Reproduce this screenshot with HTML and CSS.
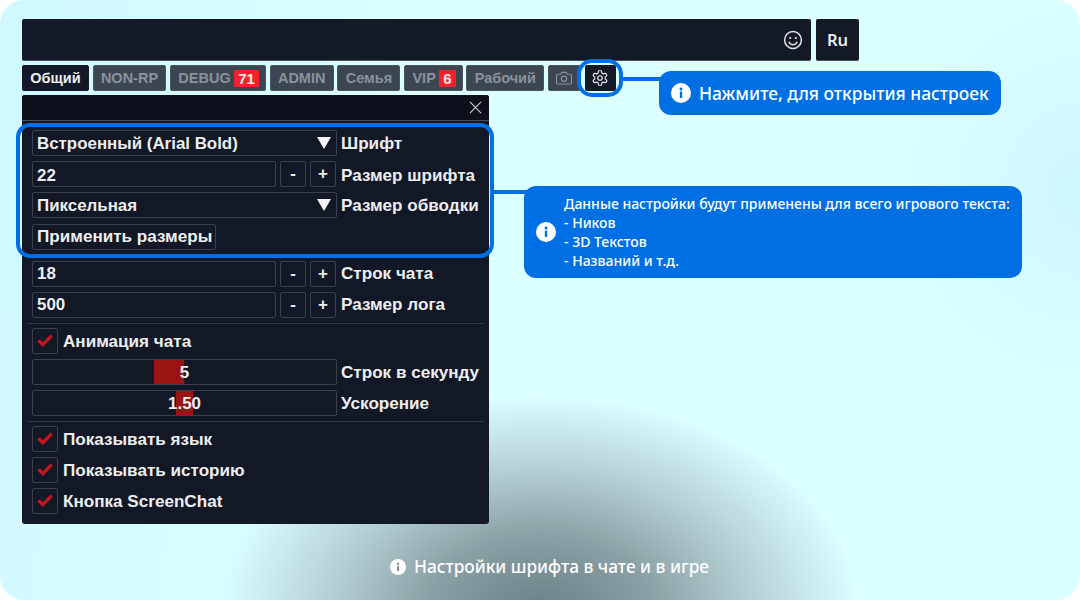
FILE: index.html
```html
<!DOCTYPE html>
<html lang="ru">
<head>
<meta charset="utf-8">
<title>Настройки чата</title>
<link rel="stylesheet" href="styles.css">
</head>
<body>
<main class="screen">
  <div class="chat-row">
    <div class="chat-input">
      <svg class="smile" viewBox="0 0 20 20"><circle cx="10" cy="10" r="8.4"/><circle class="dot" cx="7.2" cy="8" r="1.1"/><circle class="dot" cx="12.8" cy="8" r="1.1"/><path d="M5.8 11.8c1 2.1 2.5 3 4.2 3s3.200-.9 4.200-3"/></svg>
    </div>
    <div class="lang">Ru</div>
  </div>
  <div class="tabs">
    <div class="tab active">Общий</div>
    <div class="tab">NON-RP</div>
    <div class="tab">DEBUG <span class="badge">71</span></div>
    <div class="tab">ADMIN</div>
    <div class="tab">Семья</div>
    <div class="tab">VIP <span class="badge">6</span></div>
    <div class="tab">Рабочий</div>
    <div class="tab icon-tab">
      <svg viewBox="0 0 24 24"><path d="M4 7h3.500l1.800-2.500h5.400L16.500 7H20a2 2 0 0 1 2 2v9a2 2 0 0 1-2 2H4a2 2 0 0 1-2-2V9a2 2 0 0 1 2-2z"/><circle cx="12" cy="13" r="3.500"/></svg>
    </div>
    <div class="tab icon-tab gear">
      <svg viewBox="0 0 24 24"><path d="M12.220 2h-.44a2 2 0 0 0-2 2v.18a2 2 0 0 1-1 1.730l-.43.25a2 2 0 0 1-2 0l-.15-.08a2 2 0 0 0-2.730.73l-.22.38a2 2 0 0 0 .73 2.730l.15.1a2 2 0 0 1 1 1.720v.51a2 2 0 0 1-1 1.740l-.15.09a2 2 0 0 0-.73 2.730l.22.38a2 2 0 0 0 2.730.73l.15-.08a2 2 0 0 1 2 0l.43.25a2 2 0 0 1 1 1.730V20a2 2 0 0 0 2 2h.44a2 2 0 0 0 2-2v-.18a2 2 0 0 1 1-1.730l.43-.25a2 2 0 0 1 2 0l.15.08a2 2 0 0 0 2.730-.73l.22-.39a2 2 0 0 0-.73-2.730l-.15-.08a2 2 0 0 1-1-1.740v-.5a2 2 0 0 1 1-1.740l.15-.09a2 2 0 0 0 .73-2.730l-.22-.38a2 2 0 0 0-2.730-.73l-.15.08a2 2 0 0 1-2 0l-.43-.25a2 2 0 0 1-1-1.730V4a2 2 0 0 0-2-2z"/><circle cx="12" cy="12" r="3"/></svg>
    </div>
  </div>

  <section class="panel">
    <header class="panel-head">
      <svg class="close" viewBox="0 0 14 14"><path d="M1 1l12 12M13 1L1 13"/></svg>
    </header>
    <div class="panel-body">
      <div class="row">
        <div class="field select">Встроенный (Arial Bold)<svg class="arrow" viewBox="0 0 14 12"><path d="M0 0h14L7 12z"/></svg></div>
        <span class="label">Шрифт</span>
      </div>
      <div class="row low">
        <div class="field grow">22</div><div class="step">-</div><div class="step">+</div>
        <span class="label">Размер шрифта</span>
      </div>
      <div class="row">
        <div class="field select">Пиксельная<svg class="arrow" viewBox="0 0 14 12"><path d="M0 0h14L7 12z"/></svg></div>
        <span class="label">Размер обводки</span>
      </div>
      <div class="row apply-row flat">
        <div class="field apply">Применить размеры</div>
      </div>
      <div class="row spaced flat">
        <div class="field grow">18</div><div class="step">-</div><div class="step">+</div>
        <span class="label">Строк чата</span>
      </div>
      <div class="row flat">
        <div class="field grow">500</div><div class="step">-</div><div class="step">+</div>
        <span class="label">Размер лога</span>
      </div>
      <hr class="sep">
      <div class="row">
        <div class="check"><svg viewBox="0 0 26 26"><path d="M4.500 13.500l3-2.500 3.200 3.300 8.300-8.300 2.500 2.300L10.800 19.500z"/></svg></div>
        <span class="check-label">Анимация чата</span>
      </div>
      <div class="row">
        <div class="field slider"><i class="fill fill-a"></i><b class="value">5</b></div>
        <span class="label">Строк в секунду</span>
      </div>
      <div class="row">
        <div class="field slider"><i class="fill fill-b"></i><b class="value">1.50</b></div>
        <span class="label">Ускорение</span>
      </div>
      <hr class="sep">
      <div class="row">
        <div class="check"><svg viewBox="0 0 26 26"><path d="M4.500 13.500l3-2.500 3.200 3.300 8.300-8.300 2.500 2.300L10.800 19.500z"/></svg></div>
        <span class="check-label">Показывать язык</span>
      </div>
      <div class="row">
        <div class="check"><svg viewBox="0 0 26 26"><path d="M4.500 13.500l3-2.500 3.200 3.300 8.300-8.300 2.500 2.300L10.800 19.500z"/></svg></div>
        <span class="check-label">Показывать историю</span>
      </div>
      <div class="row">
        <div class="check"><svg viewBox="0 0 26 26"><path d="M4.500 13.500l3-2.500 3.200 3.300 8.300-8.300 2.500 2.300L10.800 19.500z"/></svg></div>
        <span class="check-label">Кнопка ScreenChat</span>
      </div>
    </div>
  </section>

  <div class="ring ring-gear"></div>
  <div class="ring ring-font"></div>
  <div class="link link-gear"></div>
  <div class="link link-font"></div>

  <aside class="callout callout-top">
    <svg class="info" viewBox="0 0 20 20"><circle cx="10" cy="10" r="10"/><rect x="8.800" y="8.500" width="2.400" height="6.500" rx=".4"/><circle cx="10" cy="5.900" r="1.500"/></svg>
    <span>Нажмите, для открытия настроек</span>
  </aside>
  <aside class="callout callout-side">
    <svg class="info" viewBox="0 0 20 20"><circle cx="10" cy="10" r="10"/><rect x="8.800" y="8.500" width="2.400" height="6.500" rx=".4"/><circle cx="10" cy="5.900" r="1.500"/></svg>
    <p>Данные настройки будут применены для всего игрового текста:<br>- Ников<br>- 3D Текстов<br>- Названий и т.д.</p>
  </aside>
  <div class="caption">
    <svg class="info" viewBox="0 0 20 20"><circle cx="10" cy="10" r="10"/><rect x="8.800" y="8.500" width="2.400" height="6.500" rx=".4"/><circle cx="10" cy="5.900" r="1.500"/></svg>
    <span>Настройки шрифта в чате и в игре</span>
  </div>
</main>
</body>
</html>
```
FILE: styles.css
```css
* { box-sizing: border-box; }
html, body { margin: 0; padding: 0; background: #fff; }
.screen {
  position: relative;
  width: 1080px;
  height: 600px;
  overflow: hidden;
  border-radius: 24px;
  padding: 19px 0 0 22px;
  font-family: "Liberation Sans", Arial, sans-serif;
  font-weight: 700;
  color: #eceef0;
  background:
    radial-gradient(ellipse 320px 215px at 540px 610px, #6c8186 0%, #8aa0a4 35%, #b4cfd2 65%, rgba(220,255,255,0) 100%),
    radial-gradient(ellipse 200px 200px at 1090px 190px, #cef6fe 0%, rgba(220,255,255,0) 100%),
    linear-gradient(100deg, #cff8ff 0%, #dcffff 35%, #dcffff 100%);
}
.chat-row { display: flex; gap: 5px; height: 42px; }
.chat-input {
  width: 789px;
  display: flex;
  align-items: center;
  justify-content: flex-end;
  padding-right: 8px;
  background: #131926;
  border-radius: 2px;
  border-bottom: 1px solid #4a5058;
}
.smile { width: 20px; height: 20px; fill: none; stroke: #e4e6e8; stroke-width: 1.500; }
.smile .dot { fill: #e4e6e8; stroke: none; }
.lang {
  width: 43px;
  display: flex;
  align-items: center;
  justify-content: center;
  background: #131926;
  border-radius: 2px;
  border-bottom: 1px solid #4a5058;
  font-size: 16.500px;
  font-family: "Noto Sans", sans-serif;
  font-weight: 600;
}
.tabs { display: flex; gap: 3.700px; height: 26px; margin-top: 4px; }
.tab {
  display: flex;
  align-items: center;
  gap: 3.500px;
  height: 26px;
  padding: 0 7.300px;
  font-size: 14.500px;
  white-space: nowrap;
  color: #8a929c;
  background: #3c4651;
  border: 1px solid #4a5560;
  border-radius: 2px;
}
.tab.active { background: #131926; border-color: #131926; color: #eef0f2; }
.badge {
  height: 17px;
  margin-right: -1.300px;
  padding: 0 4px;
  line-height: 17px;
  font-size: 15px;
  color: #f4e8e8;
  background: #f5222d;
  border-radius: 1px;
}
.icon-tab { width: 33px; justify-content: center; padding: 0; }
.icon-tab svg { width: 18px; height: 18px; fill: none; stroke: #8a929c; stroke-width: 1.600; }
.gear { width: 31px; background: #131926; border-color: #131926; }
.gear svg { stroke: #e8eaec; }

.panel {
  width: 467px;
  height: 429px;
  margin-top: 4px;
  background: #131826;
  border-radius: 3px;
}
.panel-head {
  display: flex;
  align-items: center;
  justify-content: flex-end;
  height: 26px;
  padding-right: 7px;
  background: #0d0f1a;
  border-bottom: 1px solid #4a4d56;
  border-radius: 3px 3px 0 0;
}
.close { width: 13px; height: 13px; fill: none; stroke: #d8dade; stroke-width: 1.100; }
.panel-body { display: flex; flex-direction: column; gap: 5px; padding: 9px 5px 0 10px; }
.row { display: flex; align-items: center; gap: 4px; height: 26px; }
.apply-row { margin-top: 1px; }
.spaced { margin-top: 6px; }
.field {
  position: relative;
  display: flex;
  align-items: center;
  height: 26px;
  padding: 2px 4px 0;
  font-size: 16.900px;
  white-space: nowrap;
  background: #131826;
  border: 1px solid #3c404e;
  border-radius: 2px;
}
.grow { width: 244px; }
.select { width: 305px; justify-content: space-between; }
.apply { width: 184px; font-size: 17.100px; }
.arrow { width: 14px; height: 12px; margin: -2px 1px 0 0; fill: #f2f2f2; }
.step {
  display: flex;
  align-items: center;
  justify-content: center;
  width: 26px;
  height: 26px;
  font-size: 16.900px;
  border: 1px solid #3c404e;
  border-radius: 2px;
}
.label { padding-top: 2px; font-size: 17.100px; white-space: nowrap; }
.step + .step + .label { margin-left: 1px; }
.sep { width: 457px; height: 1px; margin: 0 0 -1px -5px; border: 0; background: #33363f; }
.check {
  width: 26px;
  height: 26px;
  border: 1px solid #3c404e;
  border-radius: 2px;
}
.check svg { display: block; width: 24px; height: 24px; fill: #c4161c; }
.check-label { margin-left: 1px; padding-top: 2px; font-size: 17.100px; }
.slider { width: 305px; justify-content: center; padding: 2px 0 0; }
.low .field, .low .label { padding-top: 4px; }
.flat .field, .flat .label { padding-top: 0; }
.fill { position: absolute; top: 0; bottom: 0; background: #9a1414; }
.fill-a { left: 121px; width: 30px; }
.fill-b { left: 143px; width: 17px; }
.value { position: relative; }

.ring { position: absolute; border: 4px solid #006fe4; pointer-events: none; }
.ring-gear { left: 577px; top: 59px; width: 46px; height: 38px; border-radius: 15px; }
.ring-font { left: 16px; top: 123px; width: 478px; height: 135px; border-radius: 14px; }
.link { position: absolute; height: 4px; background: #006fe4; }
.link-gear { left: 623px; top: 77px; width: 40px; }
.link-font { left: 494px; top: 190px; width: 34px; }

.callout {
  position: absolute;
  display: flex;
  align-items: center;
  color: #fff;
  background: #006fe4;
  border-radius: 12px;
  font-family: "Noto Sans", sans-serif;
  font-weight: 500;
}
.callout .info, .caption .info { flex: none; fill: #fff; }
.info rect, .info circle + rect + circle { fill: #006fe4; }
.callout-top { left: 659px; top: 71px; width: 342px; height: 44px; padding-left: 12px; gap: 8px; font-size: 17.400px; }
.callout-top .info { width: 20px; height: 20px; }
.callout-side { left: 524px; top: 186px; width: 498px; height: 92px; padding-left: 12px; gap: 8px; font-size: 14px; line-height: 19px; }
.callout-side .info { width: 20px; height: 20px; }
.callout-side p { margin: 0; }
.caption {
  position: absolute;
  left: 390px;
  top: 555px;
  display: flex;
  align-items: center;
  gap: 8px;
  color: #fff;
  font-family: "Noto Sans", sans-serif;
  font-weight: 500;
  font-size: 17.250px;
}
.caption .info { width: 16px; height: 16px; }
.caption .info rect, .caption .info circle + rect + circle { fill: #7c9196; }
```
